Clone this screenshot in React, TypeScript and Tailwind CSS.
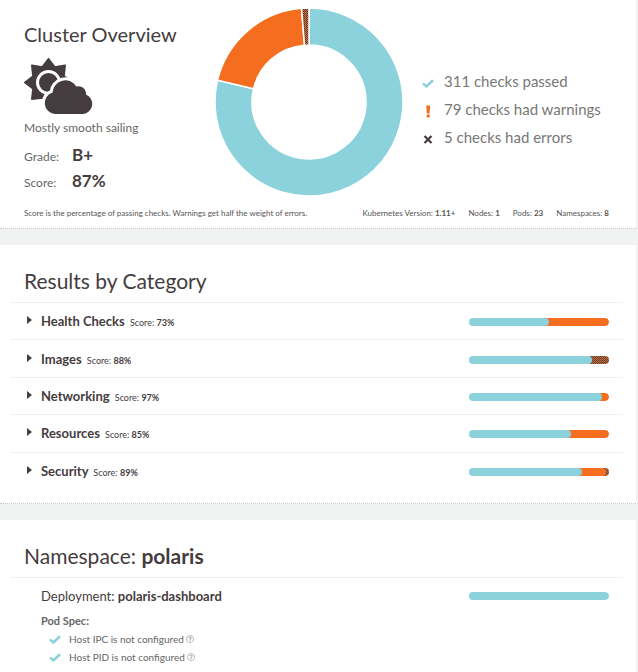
import React from "react";
import { FaRegQuestionCircle } from "react-icons/fa";

type Score = { name: string; score: number; warn: number; err: number };

const categories: Score[] = [
  { name: "Health Checks", score: 73, warn: 43, err: 0 },
  { name: "Images", score: 88, warn: 0, err: 12 },
  { name: "Networking", score: 97, warn: 5, err: 0 },
  { name: "Resources", score: 85, warn: 27, err: 0 },
  { name: "Security", score: 89, warn: 17, err: 2 },
];

const podChecks = ["Host IPC is not configured", "Host PID is not configured"];

function Card({ children }: { children: React.ReactNode }) {
  return (
    <section className="border-b border-dotted border-[#c4c6c6] bg-white">{children}</section>
  );
}

function Check({ className = "" }: { className?: string }) {
  return (
    <svg viewBox="0 0 12 9" className={className} fill="none" stroke="#8bd2dc" strokeWidth="2.6" aria-hidden="true">
      <path d="M1 4.6 4.4 7.4 11 1.2" />
    </svg>
  );
}

function Weather() {
  return (
    <svg viewBox="0 0 70 56" className="h-14 w-[70px]" fill="#453c40" role="img" aria-label="Mostly sunny">
      <path
        d="M24.500 1 30.600 9.200 41 7.500 39.800 18 48.500 24.500 39.800 31 41.500 41.500 30.600 39.800 24.500 48 18.400 39.800 8 41 9.200 30.600 1 24.500 9.200 18.400 8 7.500 18.400 9.200Z"
        stroke="#453c40"
        strokeWidth="2"
        strokeLinejoin="round"
      />
      <circle cx="24.500" cy="24.500" r="11" stroke="#fff" strokeWidth="3" />
      <path
        d="M31 56A11 11 0 0 1 28.500 34.500 13 13 0 0 1 52.500 28.500 7.500 7.500 0 0 1 62 36.500 10.200 10.200 0 0 1 59.500 56Z"
        stroke="#fff"
        strokeWidth="6"
      />
      <path d="M31 56A11 11 0 0 1 28.500 34.500 13 13 0 0 1 52.500 28.500 7.500 7.500 0 0 1 62 36.500 10.200 10.200 0 0 1 59.500 56Z" />
    </svg>
  );
}

function slice(from: number, to: number) {
  const point = (r: number, t: number) => {
    const a = t * 2 * Math.PI;
    return `${(94 + r * Math.sin(a)).toFixed(2)} ${(94 - r * Math.cos(a)).toFixed(2)}`;
  };
  const large = to - from > 0.5 ? 1 : 0;
  return `M${point(94, from)}A94 94 0 ${large} 1 ${point(94, to)}L${point(57, to)}A57 57 0 ${large} 0 ${point(57, from)}Z`;
}

function Donut() {
  const passed = 311 / 395;
  const warned = 390 / 395;
  return (
    <svg viewBox="0 0 188 188" className="size-[188px] shrink-0" role="img" aria-label="311 passed, 79 warnings, 5 errors">
      <defs>
        <pattern id="errors" width="2" height="2" patternUnits="userSpaceOnUse">
          <rect width="2" height="2" fill="#464245" />
          <rect width="1" height="1" fill="#f56e20" />
          <rect x="1" y="1" width="1" height="1" fill="#d0662a" />
        </pattern>
      </defs>
      <g stroke="#fff" strokeWidth="1.500">
        <path d={slice(0, passed)} fill="#8bd2dc" />
        <path d={slice(passed, warned)} fill="#f56e20" />
        <path d={slice(warned, 1)} fill="url(#errors)" />
      </g>
    </svg>
  );
}

function Bar({ warn, err }: { warn: number; err: number }) {
  const pass = 100 - err - warn;
  return (
    <span className="relative block h-2 w-[140px] shrink-0 overflow-hidden rounded">
      {err > 0 && (
        <span
          className="absolute inset-y-0 right-0 bg-[conic-gradient(#464245_25%,#f56e20_0_50%,#464245_0_75%,#d0662a_0)] bg-[length:2px_2px]"
          style={{ left: `${98 - err}%` }}
        />
      )}
      {warn > 0 && (
        <span className="absolute inset-y-0 rounded-r-sm bg-[#f56e20]" style={{ left: `${pass - 3}%`, right: `${err}%` }} />
      )}
      <span className="absolute inset-y-0 left-0 rounded-r-sm bg-[#8bd2dc]" style={{ width: `${pass}%` }} />
    </span>
  );
}

export default function App() {
  return (
    <main className="flex min-h-screen flex-col gap-4 overflow-x-hidden bg-[#f1f3f3] pr-0.5 font-[Lato,'Noto_Sans',sans-serif] text-[#453c40]">
      <Card>
        <div className="flex pt-2 pl-6">
          <div className="w-[191px] shrink-0 pt-3">
            <h1 className="text-[20px] leading-7 whitespace-nowrap">Cluster Overview</h1>
            <div className="pt-2.5">
              <Weather />
            </div>
            <p className="pt-1 text-xs leading-5 text-[#666]">Mostly smooth sailing</p>
            <dl className="grid grid-cols-[48px_1fr] items-center pt-1">
              <dt className="pt-1 text-xs text-[#666]">Grade:</dt>
              <dd className="text-[17px] leading-[26px] font-bold">B+</dd>
              <dt className="pt-1 text-xs text-[#666]">Score:</dt>
              <dd className="text-[17px] leading-[26px] font-bold">87%</dd>
            </dl>
          </div>
          <Donut />
          <ul className="pt-[59px] pl-[19px] text-[15px] leading-7 whitespace-nowrap text-[#777]">
            <li className="flex items-center">
              <Check className="mt-1 mr-2.5 h-[9px] w-3" />
              311 checks passed
            </li>
            <li className="flex items-center">
              <svg viewBox="0 0 12 13" className="mt-1 mr-2.5 h-[13px] w-3" fill="#f56e20" aria-hidden="true">
                <path d="M4.200 0.500h4l-.6 8h-2.800z" />
                <circle cx="6.200" cy="11" r="1.700" />
              </svg>
              79 checks had warnings
            </li>
            <li className="flex items-center">
              <svg viewBox="0 0 12 9" className="mt-1 mr-2.5 h-[9px] w-3" stroke="#453c40" strokeWidth="2.200" aria-hidden="true">
                <path d="M2.500 1 9.500 8M9.500 1 2.500 8" />
              </svg>
              5 checks had errors
            </li>
          </ul>
        </div>
        <div className="flex justify-between pt-[9px] pr-[27px] pb-[7px] pl-6 text-[8px] leading-4 whitespace-nowrap text-[#555]">
          <p>Score is the percentage of passing checks. Warnings get half the weight of errors.</p>
          <ul className="flex gap-[13px]">
            <li>Kubernetes Version: <b>1.11+</b></li>
            <li>Nodes: <b>1</b></li>
            <li>Pods: <b>23</b></li>
            <li>Namespaces: <b>8</b></li>
          </ul>
        </div>
      </Card>

      <Card>
        <h2 className="px-6 pt-[22px] pb-[7px] text-[21px] leading-7">Results by Category</h2>
        <ul className="mr-[13px] ml-2.5 flex min-h-[201px] flex-col pb-3.5">
          {categories.map((c) => (
            <li key={c.name} className="flex flex-1 border-t border-[#eff0f0]">
              <button type="button" aria-expanded="false" className="flex w-full items-center pt-0.5 pr-3.5 pl-[17px] text-left">
                <svg viewBox="0 0 5 8" className="mr-[9px] mb-1 h-2 w-[5px]" fill="#453c40" aria-hidden="true">
                  <path d="M0 0 5 4 0 8z" />
                </svg>
                <span className="flex-1 text-[13px] leading-5 font-bold">
                  {c.name} <span className="ml-0.5 text-[9px] font-normal">Score: <b>{c.score}%</b></span>
                </span>
                <Bar warn={c.warn} err={c.err} />
              </button>
            </li>
          ))}
        </ul>
      </Card>

      <section className="flex-1 bg-white">
        <h2 className="px-6 pt-[22px] pb-[7px] text-[21px] leading-7">
          Namespace: <b>polaris</b>
        </h2>
        <div className="mr-[13px] ml-2.5 border-t border-[#eff0f0] pt-2 pr-3.5 pl-[31px]">
          <div className="flex items-center justify-between">
            <h3 className="text-[13px] leading-5">Deployment: <b>polaris-dashboard</b></h3>
            <Bar warn={0} err={0} />
          </div>
          <h4 className="pt-1.5 text-[11px] leading-[18px] font-bold text-[#666]">Pod Spec:</h4>
          <ul className="pl-2 text-[10px] leading-[18px] text-[#666]">
            {podChecks.map((t) => (
              <li key={t} className="flex items-center">
                <Check className="mr-2 h-[9px] w-3" />
                {t}
                <a href="#help" aria-label={`About: ${t}`} className="ml-0.5 text-[#aaa]">
                  <FaRegQuestionCircle className="size-2" />
                </a>
              </li>
            ))}
          </ul>
        </div>
      </section>
    </main>
  );
}
